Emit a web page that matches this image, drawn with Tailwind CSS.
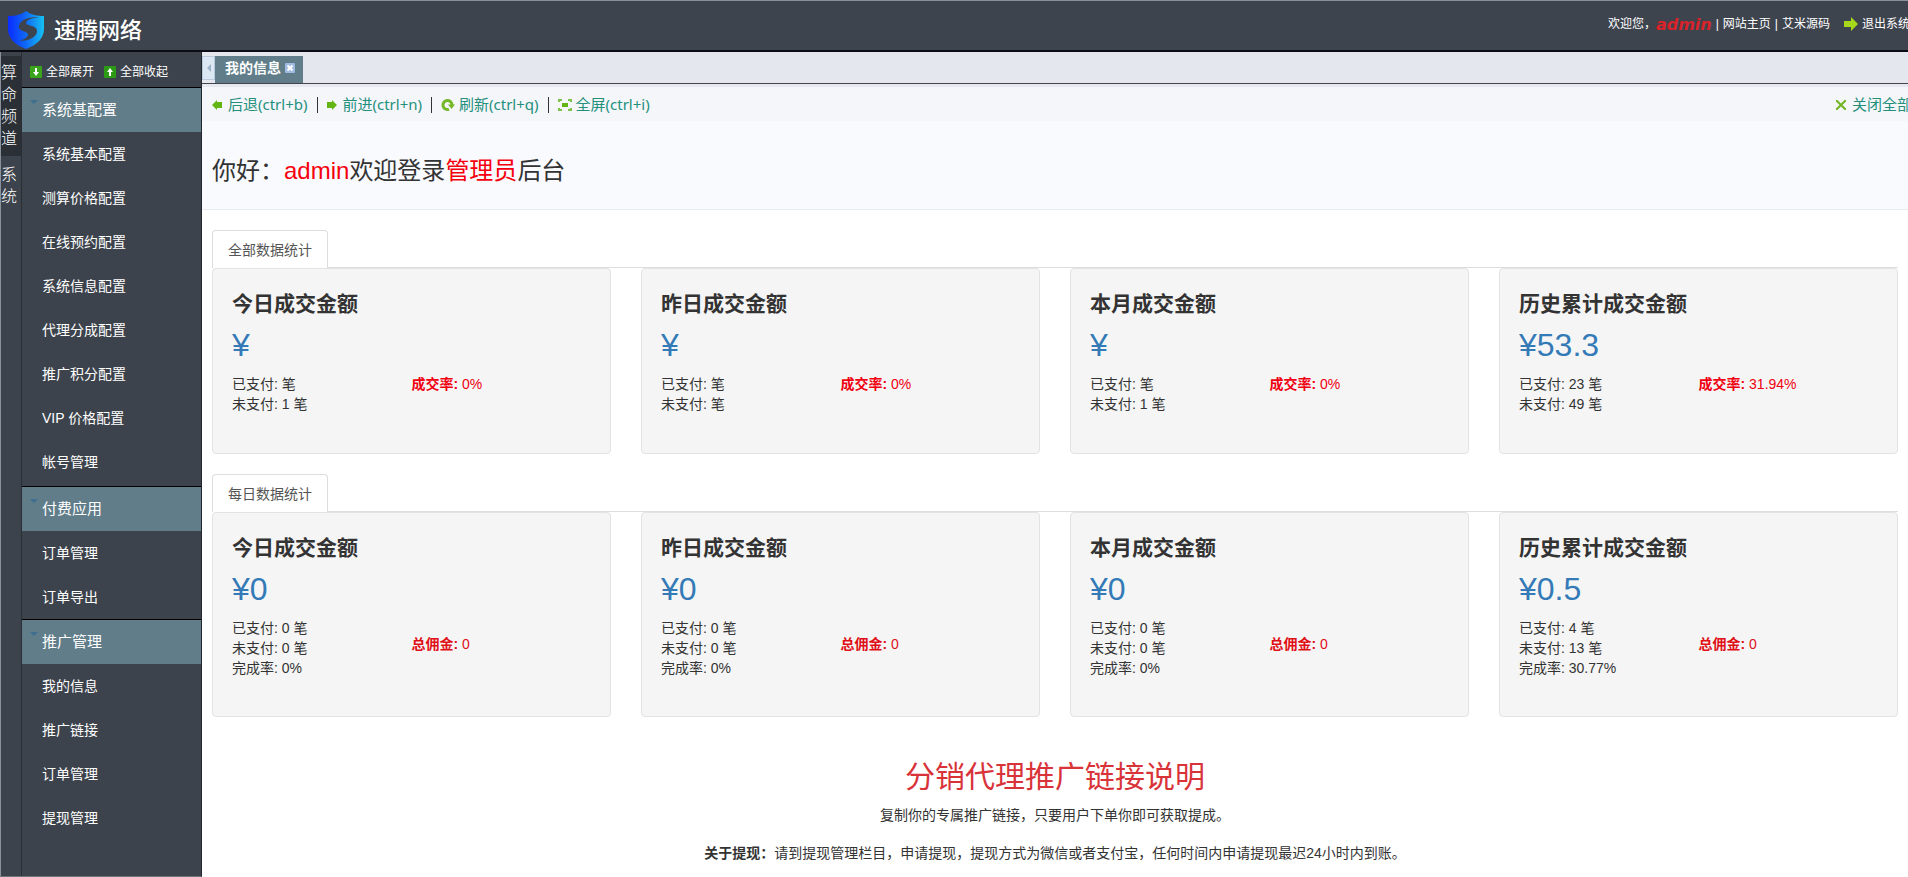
<!doctype html>
<html lang="zh-CN">
<head>
  <meta charset="UTF-8">
  <meta name="viewport" content="width=device-width, initial-scale=1.0">
  <script src="https://cdn.jsdelivr.net/npm/@tailwindcss/browser@4"></script>
  <title>速腾网络 - 后台管理</title>
</head>
<body class="flex flex-col h-screen overflow-hidden bg-white text-sm text-[#333] font-['Liberation_Sans','Noto_Sans_CJK_SC',sans-serif]">
  <header class="flex shrink-0 items-center justify-between h-13 pl-2 bg-[#3e444e] border-t border-t-[#8b9198] border-b-2 border-b-[#0c0c14]">
    <a href="#" class="flex items-center gap-2.5 pt-2">
      <svg class="w-9 h-10" viewBox="0 0 36 40">
        <defs>
          <linearGradient id="shield" x1="0" x2="1" y1="0" y2="0">
            <stop offset="0" stop-color="#0a2cff"></stop>
            <stop offset="0.45" stop-color="#0f62f5"></stop>
            <stop offset="1" stop-color="#16c0f2"></stop>
          </linearGradient>
        </defs>
        <path fill="url(#shield)" d="M18 1c5 4 11 5 18 5v13c0 9-7 16-18 20C7 35 0 28 0 19V6c7 0 13-1 18-5z"></path>
        <path fill="#3e444e" d="M31 7c-9 0-19 2-20 9-1 6 10 5 9 9-1 3-5 5-9 6 10 0 18-4 18-10 0-6-11-5-11-8 0-3 6-5 13-6z"></path>
      </svg>
      <span class="text-[22px] leading-6 pt-0.5 font-medium text-white">速腾网络</span>
    </a>
    <div class="flex items-center -mr-0.5 pb-1 text-xs text-white whitespace-nowrap">
      <span>欢迎您，</span>
      <b class="text-base leading-4 pt-0.5 italic text-[#d8232a] font-['DejaVu_Sans'] mr-1">admin</b>
      <span>|</span>
      <a href="#" class="mx-1">网站主页</a>
      <span>|</span>
      <a href="#" class="ml-1 mr-3.5">艾米源码</a>
      <a href="#" class="flex items-center gap-1">
        <svg class="w-3.5 h-4" viewBox="0 0 14 16"><path fill="#a6d81c" d="M0 5h7V1l7 7-7 7v-4H0z"></path></svg>
        退出系统
      </a>
    </div>
  </header>

  <div class="flex flex-1 min-h-0">
    <nav class="flex shrink-0 w-[202px] bg-[#3d434c] border-r border-r-[#23272d] border-b border-b-[#6f757d] text-white">
      <div class="w-[22px] shrink-0 pt-1 border-l border-l-[#8b9198] border-r border-r-[#2a2f36] text-base leading-[22px] font-light break-all">
        <a href="#" class="block py-1.5 pr-1 bg-[#2b3037]">算命频道</a>
        <a href="#" class="block py-2 pr-1">系统</a>
      </div>
      <div class="flex-1">
        <div class="flex items-center gap-2.5 h-[35px] pl-2 pt-1 text-xs">
          <button type="button" class="flex items-center gap-1">
            <svg class="w-3 h-3" viewBox="0 0 12 12"><rect width="12" height="12" rx="1" fill="#3aa51c"></rect><path fill="#fff" d="M5 2h2v4h2l-3 4-3-4h2z"></path></svg>
            全部展开
          </button>
          <button type="button" class="flex items-center gap-1">
            <svg class="w-3 h-3" viewBox="0 0 12 12"><rect width="12" height="12" rx="1" fill="#2c9a14"></rect><path fill="#fff" d="M5 10h2V6h2L6 2 3 6h2z"></path></svg>
            全部收起
          </button>
        </div>
        <div class="border-t border-black pb-0.5">
          <h3 class="relative h-11 pl-5 leading-11 text-[15px] bg-[#607d89]">
            <svg class="absolute left-2 top-3 w-2 h-1" viewBox="0 0 8 4"><path fill="#3f6f8f" d="M0 0h8L4 4z"></path></svg>
            系统基配置
          </h3>
          <ul class="leading-11">
            <li><a href="#" class="block pl-5">系统基本配置</a></li>
            <li><a href="#" class="block pl-5">测算价格配置</a></li>
            <li><a href="#" class="block pl-5">在线预约配置</a></li>
            <li><a href="#" class="block pl-5">系统信息配置</a></li>
            <li><a href="#" class="block pl-5">代理分成配置</a></li>
            <li><a href="#" class="block pl-5">推广积分配置</a></li>
            <li><a href="#" class="block pl-5">VIP 价格配置</a></li>
            <li><a href="#" class="block pl-5">帐号管理</a></li>
          </ul>
        </div>
        <div class="border-t border-black">
          <h3 class="relative h-11 pl-5 leading-11 text-[15px] bg-[#607d89]">
            <svg class="absolute left-2 top-3 w-2 h-1" viewBox="0 0 8 4"><path fill="#3f6f8f" d="M0 0h8L4 4z"></path></svg>
            付费应用
          </h3>
          <ul class="leading-11">
            <li><a href="#" class="block pl-5">订单管理</a></li>
            <li><a href="#" class="block pl-5">订单导出</a></li>
          </ul>
        </div>
        <div class="border-t border-black">
          <h3 class="relative h-11 pl-5 leading-11 text-[15px] bg-[#607d89]">
            <svg class="absolute left-2 top-3 w-2 h-1" viewBox="0 0 8 4"><path fill="#3f6f8f" d="M0 0h8L4 4z"></path></svg>
            推广管理
          </h3>
          <ul class="leading-11">
            <li><a href="#" class="block pl-5">我的信息</a></li>
            <li><a href="#" class="block pl-5">推广链接</a></li>
            <li><a href="#" class="block pl-5">订单管理</a></li>
            <li><a href="#" class="block pl-5">提现管理</a></li>
          </ul>
        </div>
      </div>
    </nav>

    <main class="flex-1 min-w-0 overflow-hidden">
      <!-- open tabs -->
      <div class="flex h-8 pt-1 bg-[#e4e7ed] border-b border-b-[#45434e]">
        <button type="button" class="flex items-center justify-center w-[13px] h-6 bg-[#dbe7f3] border border-[#b9cbdc]" aria-label="向左">
          <svg class="w-1 h-2" viewBox="0 0 4 8"><path fill="#9fb4c8" d="M4 0v8L0 4z"></path></svg>
        </button>
        <div class="flex items-center gap-1 pl-2.5 pr-2 pb-1 bg-[#607d89] text-white font-bold">
          我的信息
          <button type="button" aria-label="关闭">
            <svg class="w-2.5 h-2.5" viewBox="0 0 10 10"><rect width="10" height="10" rx="1" fill="#9dbbe0"></rect><path stroke="#fff" stroke-width="2" d="M2.500 2.500l5 5M7.500 2.500l-5 5"></path></svg>
          </button>
        </div>
      </div>
      <!-- toolbar -->
      <div class="flex items-center justify-between h-[37px] pt-0.5 pl-2.5 bg-[#f4f6fa] border-t-3 border-t-[#e6e9f0] text-[15px] text-[#24907c] whitespace-nowrap font-['Noto_Sans','Noto_Sans_CJK_SC',sans-serif]">
        <div class="flex items-center gap-[9px]">
          <a href="#" class="flex items-center gap-1.5">
            <svg class="w-2.5 h-2.5" viewBox="0 0 10 10"><path fill="#62b512" d="M0 5l5-5v2h5v6H5v2z"></path></svg>
            后退(ctrl+b)
          </a>
          <span class="w-px h-4 bg-[#333]"></span>
          <a href="#" class="flex items-center gap-1.5">
            <svg class="w-2.5 h-2.5" viewBox="0 0 10 10"><path fill="#62b512" d="M10 5L5 0v2H0v6h5v2z"></path></svg>
            前进(ctrl+n)
          </a>
          <span class="w-px h-4 bg-[#333]"></span>
          <a href="#" class="flex items-center gap-1">
            <svg class="w-3.5 h-3.5" viewBox="0 0 14 14"><path fill="none" stroke="#76b82a" stroke-width="3" d="M8 11.300A4.500 4.500 0 1 1 11 7"></path><path fill="#76b82a" d="M7 6.500h7L10.500 11z"></path></svg>
            刷新(ctrl+q)
          </a>
          <span class="w-px h-4 bg-[#333]"></span>
          <a href="#" class="flex items-center gap-1">
            <svg class="w-3.5 h-3.5" viewBox="0 0 14 14"><path fill="none" stroke="#7cc24a" stroke-width="2" d="M1 4V2h3M10 2h3v2M13 10v2h-3M4 12H1v-2"></path><rect x="4" y="5" width="6" height="4" fill="#62b512"></rect></svg>
            全屏(ctrl+i)
          </a>
        </div>
        <a href="#" class="flex items-center gap-1.5 -mr-1">
          <svg class="w-2.5 h-2.5" viewBox="0 0 10 10"><path stroke="#6fb51e" stroke-width="2" d="M0 0l10 10M10 0L0 10"></path></svg>
          关闭全部
        </a>
      </div>
      <div class="h-[89px] pl-2.5 pt-8 bg-[#f8fafe] border-b border-b-[#e8ebef]">
        <h1 class="text-2xl leading-9">你好：<span class="text-[#f5000c]">admin</span>欢迎登录<span class="text-[#f5000c]">管理员</span>后台</h1>
      </div>

      <div class="px-2.5 pt-5">
        <section>
          <div class="flex border-b border-b-[#ddd]">
            <button type="button" class="h-[38px] -mb-px px-[15px] bg-white border border-[#ddd] border-b-0 rounded-t text-[#555]">全部数据统计</button>
          </div>
          <div class="grid grid-cols-4 gap-x-[30px]">
            <div class="h-[186px] px-[19px] pt-[19px] bg-[#f5f5f5] border border-[#e3e3e3] rounded">
              <h4 class="text-[21px] leading-8 font-bold">今日成交金额</h4>
              <p class="pt-[5px] text-[32px] leading-10 text-[#337ab7]">¥</p>
              <div class="grid grid-cols-2 pt-[9px] leading-5">
                <p>已支付: 笔<br>未支付: 1 笔</p>
                <p class="text-[#f00010]"><b>成交率:</b> 0%</p>
              </div>
            </div>
            <div class="h-[186px] px-[19px] pt-[19px] bg-[#f5f5f5] border border-[#e3e3e3] rounded">
              <h4 class="text-[21px] leading-8 font-bold">昨日成交金额</h4>
              <p class="pt-[5px] text-[32px] leading-10 text-[#337ab7]">¥</p>
              <div class="grid grid-cols-2 pt-[9px] leading-5">
                <p>已支付: 笔<br>未支付: 笔</p>
                <p class="text-[#f00010]"><b>成交率:</b> 0%</p>
              </div>
            </div>
            <div class="h-[186px] px-[19px] pt-[19px] bg-[#f5f5f5] border border-[#e3e3e3] rounded">
              <h4 class="text-[21px] leading-8 font-bold">本月成交金额</h4>
              <p class="pt-[5px] text-[32px] leading-10 text-[#337ab7]">¥</p>
              <div class="grid grid-cols-2 pt-[9px] leading-5">
                <p>已支付: 笔<br>未支付: 1 笔</p>
                <p class="text-[#f00010]"><b>成交率:</b> 0%</p>
              </div>
            </div>
            <div class="h-[186px] px-[19px] pt-[19px] bg-[#f5f5f5] border border-[#e3e3e3] rounded">
              <h4 class="text-[21px] leading-8 font-bold">历史累计成交金额</h4>
              <p class="pt-[5px] text-[32px] leading-10 text-[#337ab7]">¥53.3</p>
              <div class="grid grid-cols-2 pt-[9px] leading-5">
                <p>已支付: 23 笔<br>未支付: 49 笔</p>
                <p class="text-[#f00010]"><b>成交率:</b> 31.94%</p>
              </div>
            </div>
          </div>
        </section>

        <section class="mt-5">
          <div class="flex border-b border-b-[#ddd]">
            <button type="button" class="h-[38px] -mb-px px-[15px] bg-white border border-[#ddd] border-b-0 rounded-t text-[#555]">每日数据统计</button>
          </div>
          <div class="grid grid-cols-4 gap-x-[30px]">
            <div class="h-[205px] px-[19px] pt-[19px] bg-[#f5f5f5] border border-[#e3e3e3] rounded">
              <h4 class="text-[21px] leading-8 font-bold">今日成交金额</h4>
              <p class="pt-[5px] text-[32px] leading-10 text-[#337ab7]">¥0</p>
              <div class="grid grid-cols-2 pt-[9px] leading-5">
                <p>已支付: 0 笔<br>未支付: 0 笔<br>完成率: 0%</p>
                <p class="pt-4 text-[#e01018]"><b>总佣金:</b> 0</p>
              </div>
            </div>
            <div class="h-[205px] px-[19px] pt-[19px] bg-[#f5f5f5] border border-[#e3e3e3] rounded">
              <h4 class="text-[21px] leading-8 font-bold">昨日成交金额</h4>
              <p class="pt-[5px] text-[32px] leading-10 text-[#337ab7]">¥0</p>
              <div class="grid grid-cols-2 pt-[9px] leading-5">
                <p>已支付: 0 笔<br>未支付: 0 笔<br>完成率: 0%</p>
                <p class="pt-4 text-[#e01018]"><b>总佣金:</b> 0</p>
              </div>
            </div>
            <div class="h-[205px] px-[19px] pt-[19px] bg-[#f5f5f5] border border-[#e3e3e3] rounded">
              <h4 class="text-[21px] leading-8 font-bold">本月成交金额</h4>
              <p class="pt-[5px] text-[32px] leading-10 text-[#337ab7]">¥0</p>
              <div class="grid grid-cols-2 pt-[9px] leading-5">
                <p>已支付: 0 笔<br>未支付: 0 笔<br>完成率: 0%</p>
                <p class="pt-4 text-[#e01018]"><b>总佣金:</b> 0</p>
              </div>
            </div>
            <div class="h-[205px] px-[19px] pt-[19px] bg-[#f5f5f5] border border-[#e3e3e3] rounded">
              <h4 class="text-[21px] leading-8 font-bold">历史累计成交金额</h4>
              <p class="pt-[5px] text-[32px] leading-10 text-[#337ab7]">¥0.5</p>
              <div class="grid grid-cols-2 pt-[9px] leading-5">
                <p>已支付: 4 笔<br>未支付: 13 笔<br>完成率: 30.77%</p>
                <p class="pt-4 text-[#e01018]"><b>总佣金:</b> 0</p>
              </div>
            </div>
          </div>
        </section>

        <section class="pt-10 text-center">
          <h2 class="text-3xl leading-10 text-[#d9333a]">分销代理推广链接说明</h2>
          <p class="pt-1.5 leading-6">复制你的专属推广链接，只要用户下单你即可获取提成。</p>
          <p class="pt-3.5 leading-6"><b>关于提现：</b>请到提现管理栏目，申请提现，提现方式为微信或者支付宝，任何时间内申请提现最迟24小时内到账。</p>
        </section>
      </div>
    </main>
  </div>
</body>
</html>
